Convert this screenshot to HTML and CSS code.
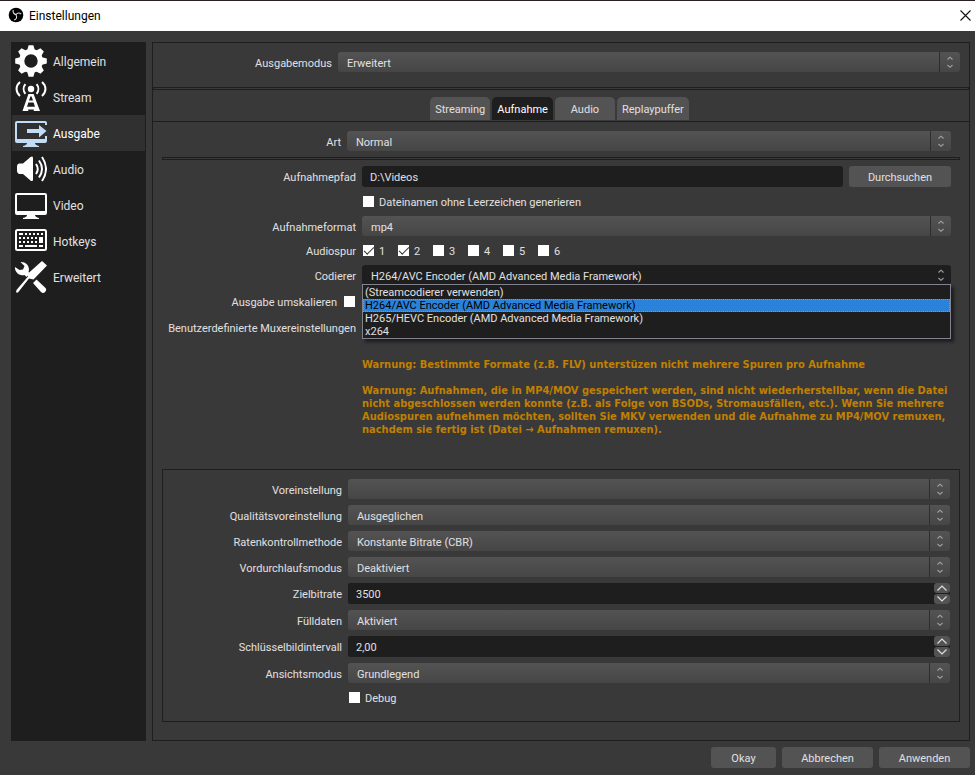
FILE: index.html
```html
<!DOCTYPE html>
<html lang="de">
<head>
<meta charset="utf-8">
<title>Einstellungen</title>
<link rel="stylesheet" href="styles.css">
</head>
<body>
<svg class="symbols" aria-hidden="true">
  <symbol id="updown" viewBox="0 0 20 20">
    <path d="M7.5 7.5 L10 5.2 L12.5 7.5 M7.5 13 L10 15.3 L12.5 13" fill="none" stroke="currentColor" stroke-width="1.1"/>
  </symbol>
  <symbol id="up" viewBox="0 0 16 10"><path d="M3.5 7.5 L8 3 L12.5 7.5" fill="none" stroke="currentColor" stroke-width="1.2"/></symbol>
  <symbol id="down" viewBox="0 0 16 10"><path d="M3.5 2.5 L8 7 L12.5 2.5" fill="none" stroke="currentColor" stroke-width="1.2"/></symbol>
  <symbol id="tooth" viewBox="0 0 32 32"><path d="M13.6 0.2 H18.4 L20 6 H12 Z"/></symbol>
</svg>
<div class="window">
  <header class="titlebar">
    <svg class="logo" viewBox="0 0 16 16" aria-hidden="true">
      <circle cx="8" cy="8" r="7.3" fill="#000"/>
      <g fill="none" stroke="#ddd" stroke-width="1.1">
        <path d="M5.2 3 C4.6 5.4 6 7.3 8.2 7.6"/>
        <path d="M13.2 7.2 C11.4 5.4 9 5.8 8 7.8"/>
        <path d="M6 13 C8.4 12.4 9.4 10.2 8 8"/>
      </g>
    </svg>
    <h1>Einstellungen</h1>
    <button class="close" aria-label="Schließen"><svg viewBox="0 0 11 11"><path d="M0.5 0.5 L10.5 10.5 M10.5 0.5 L0.5 10.5" stroke="#111" stroke-width="1.1"/></svg></button>
  </header>

  <div class="body">
    <nav class="sidebar">
      <a href="#allgemein">
        <svg viewBox="0 0 32 32"><g fill="#fff"><use href="#tooth"/><use href="#tooth" transform="rotate(45 16 16)"/><use href="#tooth" transform="rotate(90 16 16)"/><use href="#tooth" transform="rotate(135 16 16)"/><use href="#tooth" transform="rotate(180 16 16)"/><use href="#tooth" transform="rotate(225 16 16)"/><use href="#tooth" transform="rotate(270 16 16)"/><use href="#tooth" transform="rotate(315 16 16)"/></g><circle cx="16" cy="16" r="9.3" fill="none" stroke="#fff" stroke-width="5.2"/></svg>
        <span>Allgemein</span></a>
      <a href="#stream">
        <svg viewBox="0 0 32 32"><circle cx="16" cy="8" r="3.2" fill="#fff"/><g fill="none" stroke="#fff" stroke-width="2"><path d="M10.4 3.2 A7.5 7.5 0 0 0 10.4 12.8 M21.6 3.2 A7.5 7.5 0 0 1 21.6 12.8"/><path d="M5 1 C0.4 5 0.4 11 5 15 M27 1 C31.6 5 31.6 11 27 15"/></g><path fill="#fff" fill-rule="evenodd" d="M13.4 13 H18.6 L25 30 H18.8 V28.5 H13.2 V30 H7.5 Z M15.4 15.5 L14 19.5 H18 L16.6 15.5 Z M13.4 21.5 L12 25.7 H20 L18.6 21.5 Z"/></svg>
        <span>Stream</span></a>
      <a href="#ausgabe" class="active" aria-current="page">
        <svg viewBox="0 0 32 32" fill="#c3dcf5"><path d="M2 4 H30 A2 2 0 0 1 32 6 V8 H30 V6 H2 V22 H30 V19 H32 V24 A2 2 0 0 1 30 26 H20 Q20 28 24 29 V30 H8 V29 Q12 28 12 26 H2 A2 2 0 0 1 0 24 V6 A2 2 0 0 1 2 4 Z"/><path d="M12 12 H24 V8 L31.5 14 L24 20.5 V16 H12 Z"/></svg>
        <span>Ausgabe</span></a>
      <a href="#audio">
        <svg viewBox="0 0 32 32"><path fill="#fff" d="M4 10.5 H8 L15.5 4 Q18 2.5 18 5 V26.5 Q18 29 15.5 27.5 L8 21 H4 Q2 20 2 18 V13 Q2 11 4 10.5 Z"/><g fill="none" stroke="#fff" stroke-width="2"><path d="M21 11 Q24.5 16 21 21 M24 7.5 Q30 16 24 24.5 M27 4 Q35 16 27 28"/></g></svg>
        <span>Audio</span></a>
      <a href="#video">
        <svg viewBox="0 0 32 32" fill="#fff"><path fill-rule="evenodd" d="M2 4 H30 A2 2 0 0 1 32 6 V24 A2 2 0 0 1 30 26 H20 Q20 28 24 29 V30 H8 V29 Q12 28 12 26 H2 A2 2 0 0 1 0 24 V6 A2 2 0 0 1 2 4 Z M2 6 V22 H30 V6 Z"/></svg>
        <span>Video</span></a>
      <a href="#hotkeys">
        <svg viewBox="0 0 32 32"><rect x="1" y="5" width="30" height="20" rx="1.5" fill="none" stroke="#fff" stroke-width="2"/><g stroke="#fff" stroke-width="2" fill="none"><path stroke-dasharray="4 2 2 2 2 2 2 2 2 2 2 2" d="M4 9 H28"/><path stroke-dasharray="2 2" d="M4 13 H23 M4 17 H23"/><path d="M4 21 H8 M10 21 H22 M24 21 H28"/></g><rect x="24" y="12" width="4" height="6" fill="#fff"/></svg>
        <span>Hotkeys</span></a>
      <a href="#erweitert">
        <svg viewBox="0 0 32 32" fill="#fff"><path d="M27 0 L32 4.5 L18.5 18.5 L14 17.5 L3 31.5 L1 31.5 L1.5 29 L13 15.5 L13 12.5 Z"/><path d="M5.5 1 A7.5 7.5 0 0 1 13.5 11 L15 12.5 L11.5 16 L9.5 14 A7.5 7.5 0 0 1 0 6 L4.5 9 L8 8.5 L9.5 5 Z"/><path d="M21.5 18.5 L30 26.5 A3 3 0 0 1 26 31 L18 22 Z"/></svg>
        <span>Erweitert</span></a>
    </nav>

    <main class="panel">
      <div class="row mode">
        <label for="mode">Ausgabemodus</label>
        <span class="combo"><select id="mode"><option>Erweitert</option></select><svg><use href="#updown"/></svg></span>
      </div>
      <hr>
      <div class="tabs" role="tablist">
        <button role="tab">Streaming</button>
        <button role="tab" aria-selected="true">Aufnahme</button>
        <button role="tab">Audio</button>
        <button role="tab">Replaypuffer</button>
      </div>
      <section class="page">
        <div class="row kind">
          <label for="kind">Art</label>
          <span class="combo"><select id="kind"><option>Normal</option></select><svg><use href="#updown"/></svg></span>
        </div>
        <hr>
        <div class="form recording">
          <label for="path">Aufnahmepfad</label>
          <div class="path"><input id="path" class="text" type="text" value="D:\Videos"><button class="btn">Durchsuchen</button></div>

          <label class="check field"><input type="checkbox"><span>Dateinamen ohne Leerzeichen generieren</span></label>

          <label for="format">Aufnahmeformat</label>
          <span class="combo"><select id="format"><option>mp4</option></select><svg><use href="#updown"/></svg></span>

          <span class="name">Audiospur</span>
          <div class="tracks">
            <label class="check"><input type="checkbox" checked><span>1</span></label>
            <label class="check"><input type="checkbox" checked><span>2</span></label>
            <label class="check"><input type="checkbox"><span>3</span></label>
            <label class="check"><input type="checkbox"><span>4</span></label>
            <label class="check"><input type="checkbox"><span>5</span></label>
            <label class="check"><input type="checkbox"><span>6</span></label>
          </div>

          <label for="encoder">Codierer</label>
          <div class="combo open"><select id="encoder"><option>H264/AVC Encoder (AMD Advanced Media Framework)</option></select><svg><use href="#updown"/></svg>
            <ul class="popup" role="listbox">
              <li role="option">(Streamcodierer verwenden)</li>
              <li role="option" aria-selected="true">H264/AVC Encoder (AMD Advanced Media Framework)</li>
              <li role="option">H265/HEVC Encoder (AMD Advanced Media Framework)</li>
              <li role="option">x264</li>
            </ul>
          </div>

          <label class="check rescale"><span>Ausgabe umskalieren</span><input type="checkbox"></label>
          <span class="combo"><select disabled></select></span>

          <label for="muxer">Benutzerdefinierte Muxereinstellungen</label>
          <input id="muxer" class="text" type="text">

          <div class="warning field">
            <p>Warnung: Bestimmte Formate (z.B. FLV) unterstüzen nicht mehrere Spuren pro Aufnahme</p>
            <p>Warnung: Aufnahmen, die in MP4/MOV gespeichert werden, sind nicht wiederherstellbar, wenn die Datei nicht abgeschlossen werden konnte (z.B. als Folge von BSODs, Stromausfällen, etc.). Wenn Sie mehrere Audiospuren aufnehmen möchten, sollten Sie MKV verwenden und die Aufnahme zu MP4/MOV remuxen, nachdem sie fertig ist (Datei → Aufnahmen remuxen).</p>
          </div>
        </div>

        <div class="form encoder">
          <label for="preset">Voreinstellung</label>
          <span class="combo"><select id="preset"><option></option></select><svg><use href="#updown"/></svg></span>
          <label for="quality">Qualitätsvoreinstellung</label>
          <span class="combo"><select id="quality"><option>Ausgeglichen</option></select><svg><use href="#updown"/></svg></span>
          <label for="rate">Ratenkontrollmethode</label>
          <span class="combo"><select id="rate"><option>Konstante Bitrate (CBR)</option></select><svg><use href="#updown"/></svg></span>
          <label for="prepass">Vordurchlaufsmodus</label>
          <span class="combo"><select id="prepass"><option>Deaktiviert</option></select><svg><use href="#updown"/></svg></span>
          <label for="bitrate">Zielbitrate</label>
          <div class="spin"><input id="bitrate" type="text" value="3500"><div class="steps"><button aria-label="Mehr"><svg><use href="#up"/></svg></button><button aria-label="Weniger"><svg><use href="#down"/></svg></button></div></div>
          <label for="filler">Fülldaten</label>
          <span class="combo"><select id="filler"><option>Aktiviert</option></select><svg><use href="#updown"/></svg></span>
          <label for="keyint">Schlüsselbildintervall</label>
          <div class="spin"><input id="keyint" type="text" value="2,00"><div class="steps"><button aria-label="Mehr"><svg><use href="#up"/></svg></button><button aria-label="Weniger"><svg><use href="#down"/></svg></button></div></div>
          <label for="view">Ansichtsmodus</label>
          <span class="combo"><select id="view"><option>Grundlegend</option></select><svg><use href="#updown"/></svg></span>
          <label class="check field"><input type="checkbox"><span>Debug</span></label>
        </div>
      </section>
    </main>
  </div>

  <footer class="actions">
    <button class="btn ok">Okay</button>
    <button class="btn">Abbrechen</button>
    <button class="btn">Anwenden</button>
  </footer>
</div>
</body>
</html>
```
FILE: styles.css
```css
* { box-sizing: border-box; }

body {
  margin: 0;
  background: #fff;
  color: #e1e0e1;
  font: 11px/13px Roboto, sans-serif;
}

button, input, select { font: inherit; color: inherit; margin: 0; }

.symbols { display: none; }

.window {
  display: flex;
  flex-direction: column;
  min-height: calc(100vh - 2px);
  margin-right: 4px;
  background: #3a393a;
}

/* Title bar */
.titlebar {
  display: flex;
  align-items: center;
  height: 31px;
  padding: 0 4px 2px 8px;
  border-top: 1px solid #2a2020;
  background: #fff;
  color: #000;
}
.titlebar h1 { flex: 1; margin: 0 0 0 5px; padding-top: 2px; font: 12px/16px Roboto, sans-serif; }
.logo { width: 16px; height: 16px; }
.close { padding: 0; border: 0; background: none; }
.close svg { display: block; width: 11px; height: 11px; }

.body {
  flex: 1;
  display: flex;
  gap: 6px;
  padding: 11px 5px 6px 11px;
}

/* Navigation */
.sidebar {
  flex: 0 0 135px;
  padding: 1px;
  background: #1f1e1f;
  font: 12px/16px Roboto, sans-serif;
}
.sidebar a {
  display: flex;
  align-items: center;
  gap: 6px;
  height: 36px;
  padding: 0 3px;
  color: inherit;
  text-decoration: none;
}
.sidebar a.active { background: #313031; color: #fff; }
.sidebar span { padding-top: 2px; }
.sidebar svg { width: 32px; height: 32px; }

/* Content */
.panel {
  flex: 1;
  min-width: 0;
  border: 1px solid #1f1e1f;
}
hr {
  height: 3px;
  margin: 0;
  border: 1px solid #1f1e1f;
}
.row, .form {
  display: grid;
  column-gap: 6px;
  row-gap: 6px;
  align-items: center;
}
.row > label, .form > label, .name { text-align: right; white-space: nowrap; }
.row > label, .form > label:not(.check), .name, .check span { padding-top: 2px; }
.mode { grid-template-columns: 179px 1fr; padding: 9px 9px 15px 0; }
.kind { grid-template-columns: 179px 1fr; padding: 0 9px 6px 0; }
.recording { grid-template-columns: 194px 1fr; padding: 6px 9px 6px 0; }
.encoder {
  grid-template-columns: 179px 1fr;
  padding: 9px 9px 15px 0;
  border: 1px solid #1f1e1f;
}
.form > .field { grid-column: 2; text-align: left; }

.tabs {
  display: flex;
  justify-content: center;
  gap: 2px;
  padding: 7px 3px 1px 0;
  border-bottom: 1px solid #1f1e1f;
}
.tabs button {
  min-width: 60px;
  height: 23px;
  padding: 2px 5px 0;
  border: 0;
  border-radius: 5px 5px 0 0;
  background: #545354;
}
.tabs button[aria-selected="true"] { background: #1f1e1f; color: #fff; }

.page { padding: 9px; }

/* Controls */
.combo { position: relative; display: grid; height: 20px; }
.combo > select, .combo > svg { grid-area: 1 / 1; }
.combo > select {
  appearance: none;
  width: 100%;
  height: 20px;
  padding: 2px 24px 0 9px;
  border: 0;
  border-radius: 3px;
  background: linear-gradient(#545354, #474647);
}
.combo > svg {
  justify-self: end;
  width: 21px;
  height: 20px;
  border-left: 1px solid #2e2d2e;
  color: #a3a2a3;
  pointer-events: none;
}
.combo.open > select { background: #1f1e1f; }
.combo.open > svg { border-color: transparent; }

.popup {
  position: absolute;
  z-index: 1;
  top: 19px;
  left: 0;
  right: 0;
  margin: 0;
  padding: 1px 0 0;
  list-style: none;
  border: 1px solid #83838f;
  background: #1f1e1f;
  box-shadow: 3px 3px 3px rgba(0, 0, 0, 0.5);
}
.popup li { padding: 0 2px; line-height: 13px; }
.popup li[aria-selected="true"] {
  background: #2a82da;
  color: #000;
  outline: 1px dotted #e08030;
  outline-offset: -1px;
}

.text, .spin > input {
  width: 100%;
  min-width: 0;
  height: 21px;
  padding: 2px 8px 0;
  border: 0;
  border-radius: 3px;
  background: #1f1e1f;
}
.path { display: flex; gap: 6px; }
.path .btn { flex: 0 0 102px; }

.btn {
  min-width: 91px;
  height: 21px;
  padding: 2px 18px 0;
  border: 0;
  border-radius: 3px;
  background: #545354;
}
.btn.ok { min-width: 65px; }

.check { display: flex; align-items: center; gap: 4px; height: 17px; }
.rescale { justify-content: flex-end; gap: 6px; }
.check input {
  appearance: none;
  flex: none;
  display: grid;
  width: 11px;
  height: 11px;
  margin: 0 1px;
  background: #fff;
}
.check input:checked::after {
  content: "";
  width: 9px;
  height: 4px;
  margin: 2px 0 0 1px;
  border: solid #3a393a;
  border-width: 0 0 1px 1px;
  rotate: -45deg;
}
.tracks { display: grid; grid-template-columns: repeat(6, 35px); }

.spin { display: flex; background: #1f1e1f; border-radius: 3px; }
.steps { display: grid; gap: 1px; flex: 0 0 16px; }
.steps button {
  height: 10px;
  padding: 0;
  border: 0;
  border-radius: 3px;
  background: #545354;
}
.steps svg { display: block; width: 16px; height: 10px; }

.warning {
  padding: 1px 0 27px;
  color: #c08000;
  font-family: "DejaVu Sans Condensed", "DejaVu Sans", sans-serif;
  font-weight: bold;
}
.warning p { margin: 13px 0 0; }

.actions {
  display: flex;
  justify-content: flex-end;
  gap: 6px;
  padding: 0 5px 7px;
}
```
